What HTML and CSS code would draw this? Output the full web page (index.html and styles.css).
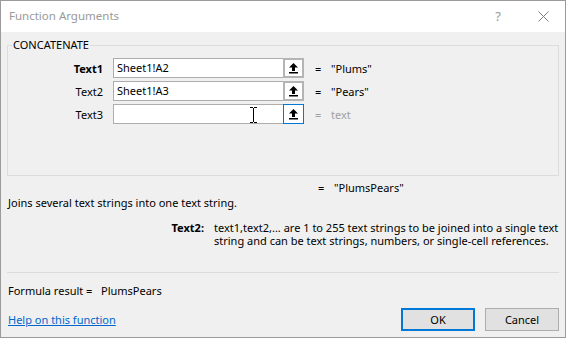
FILE: index.html
```html
<!DOCTYPE html>
<html lang="en">
<head>
  <meta charset="UTF-8">
  <title>Function Arguments</title>
  <link rel="stylesheet" href="styles.css">
</head>
<body>
  <div class="dialog">
    <!-- Title bar -->
    <div class="titlebar">
      <span class="title">Function Arguments</span>
      <span class="help-btn">?</span>
      <svg class="close-btn" width="11" height="11" viewBox="0 0 11 11">
        <path d="M0.5 0.5 L10.5 10.5 M10.5 0.5 L0.5 10.5" stroke="#808080" stroke-width="1" fill="none"/>
      </svg>
    </div>

    <div class="content">
      <fieldset class="group">
        <legend>CONCATENATE</legend>
        <div class="args">
          <label class="arg-label bold">Text1</label>
          <div class="ref-box">
            <span class="ref-input">Sheet1!A2</span>
            <span class="ref-btn">
              <svg width="11" height="12" viewBox="0 0 11 12"><path d="M5.5 1 L1 5.5 H4 V9 H7 V5.5 H10 Z M1 10 H10 V11.5 H1 Z" fill="#000"/></svg>
            </span>
          </div>
          <div class="arg-value"><span class="eq">=</span>"Plums"</div>

          <label class="arg-label">Text2</label>
          <div class="ref-box">
            <span class="ref-input">Sheet1!A3</span>
            <span class="ref-btn">
              <svg width="11" height="12" viewBox="0 0 11 12"><path d="M5.5 1 L1 5.5 H4 V9 H7 V5.5 H10 Z M1 10 H10 V11.5 H1 Z" fill="#000"/></svg>
            </span>
          </div>
          <div class="arg-value"><span class="eq">=</span>"Pears"</div>

          <label class="arg-label">Text3</label>
          <div class="ref-box">
            <span class="ref-input">
              <svg class="ibeam" width="7" height="16" viewBox="0 0 7 16"><path d="M0 0.5 H3 M4 0.5 H7 M3.5 1 V15 M0 15.5 H3 M4 15.5 H7" stroke="#000" stroke-width="1" fill="none"/></svg>
            </span>
            <span class="ref-btn focus">
              <svg width="11" height="12" viewBox="0 0 11 12"><path d="M5.5 1 L1 5.5 H4 V9 H7 V5.5 H10 Z M1 10 H10 V11.5 H1 Z" fill="#000"/></svg>
            </span>
          </div>
          <div class="arg-value muted"><span class="eq">=</span>text</div>
        </div>
      </fieldset>

      <div class="result-line"><span class="eq">=</span>"PlumsPears"</div>
      <div class="summary">Joins several text strings into one text string.</div>

      <div class="arg-help">
        <span class="bold">Text2:</span>
        <span>text1,text2,... are 1 to 255 text strings to be joined into a single text string and can be text strings, numbers, or single-cell references.</span>
      </div>

      <div class="separator"></div>

      <div class="formula">Formula result =&nbsp;&nbsp;&nbsp;<span>PlumsPears</span></div>

      <div class="footer">
        <a href="#" class="help-link">Help on this function</a>
        <div class="buttons">
          <button class="btn default">OK</button>
          <button class="btn">Cancel</button>
        </div>
      </div>
    </div>
  </div>
</body>
</html>
```

FILE: styles.css
```css
:root {
  --panel: #f0f0f0;
  --border: #dcdcdc;
  --input-border: #adadad;
  --accent: #0078d7;
  --muted: #a0a0a0;
}

body {
  margin: 0;
  background: #ffffff;
  font-family: 'Noto Sans', 'Open Sans', sans-serif;
  font-size: 11px;
  color: #000;
}

.dialog {
  width: 564px;
  height: 336px;
  border: 1px solid #9b9b9b;
  background: var(--panel);
  display: flex;
  flex-direction: column;
}

.titlebar {
  height: 31px;
  background: #fff;
  display: flex;
  align-items: center;
  padding-left: 8px;
}

.title {
  flex: 1;
  color: #999;
  font-size: 11.5px;
  margin-top: -2px;
}

.help-btn {
  color: #999;
  font-size: 13px;
  margin-right: 37px;
  margin-top: -2px;
}

.close-btn {
  margin-right: 16px;
  margin-top: -1px;
}

.content {
  padding: 0 6px;
  flex: 1;
  display: flex;
  flex-direction: column;
}

.bold { font-weight: bold; }

/* argument group */
.group {
  margin: 6px 0 0 0;
  padding: 6px 0 0 0;
  border: 1px solid var(--border);
  height: 138px;
  box-sizing: border-box;
}

.group legend {
  padding: 0 1px;
  margin-left: 4px;
  font-size: 11px;
  line-height: 14px;
}

.args {
  display: grid;
  grid-template-columns: 88px 191px 1fr;
  grid-auto-rows: 20px;
  row-gap: 3px;
  column-gap: 10px;
  align-items: center;
  margin-left: 7px;
}

.arg-label {
  text-align: right;
}

.ref-box {
  display: flex;
  height: 20px;
}

.ref-input {
  flex: 1;
  background: #fff;
  border: 1px solid var(--input-border);
  border-right: none;
  padding-left: 3px;
  display: flex;
  align-items: center;
  line-height: 18px;
  position: relative;
}

.ibeam {
  position: absolute;
  left: 136px;
  top: 2px;
}

.ref-btn {
  width: 17px;
  height: 16px;
  border: 2px solid #b4b4b4;
  background: #fff;
  display: flex;
  align-items: center;
  justify-content: center;
}

.ref-btn.focus {
  width: 19px;
  height: 18px;
  border: 1px solid var(--accent);
}

.arg-value {
  padding-left: 1px;
}

.eq {
  display: inline-block;
  width: 16px;
}

.muted { color: var(--muted); }

.result-line {
  padding-left: 311px;
  line-height: 14px;
  margin-top: 5px;
}

.summary {
  line-height: 14px;
  margin-top: 1px;
  padding-left: 1px;
}

.arg-help {
  display: grid;
  grid-template-columns: 197px 1fr;
  column-gap: 10px;
  margin-top: 11px;
  line-height: 13px;
}

.arg-help .bold {
  text-align: right;
}

.separator {
  height: 1px;
  background: var(--border);
  margin-top: 25px;
}

.formula {
  margin-top: 11px;
  line-height: 14px;
  padding-left: 1px;
}

.footer {
  display: flex;
  align-items: center;
  justify-content: space-between;
  margin-top: 10px;
}

.help-link {
  color: #0066cc;
  padding-left: 1px;
}

.buttons {
  display: flex;
  gap: 10px;
}

.btn {
  width: 74px;
  height: 23px;
  font-family: inherit;
  font-size: 11px;
  background: #e1e1e1;
  border: 1px solid var(--input-border);
  padding: 0;
}

.btn.default {
  border: 2px solid var(--accent);
}
```
